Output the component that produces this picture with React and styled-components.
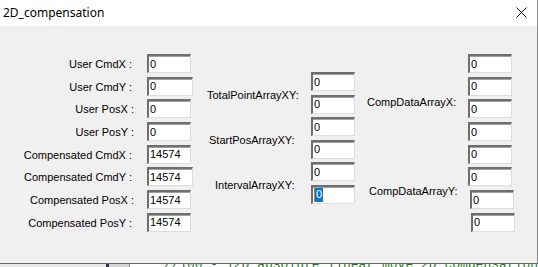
import React from "react";
import styled, { createGlobalStyle } from "styled-components";

const GlobalStyle = createGlobalStyle`
  html, body {
    margin: 0;
    padding: 0;
    background: #ffffff;
    overflow: hidden;
  }
`;

const leftRows = [
  { label: "User CmdX :", value: "0", w: 44 },
  { label: "User CmdY :", value: "0", w: 46 },
  { label: "User PosX :", value: "0", w: 44, shift: 2 },
  { label: "User PosY :", value: "0", w: 44, shift: 2 },
  { label: "Compensated CmdX :", value: "14574", w: 44 },
  { label: "Compensated CmdY :", value: "14574", w: 46 },
  { label: "Compensated PosX :", value: "14574", w: 44, shift: 2 },
  { label: "Compensated PosY :", value: "14574", w: 44 }
];

const middleGroups = [
  { label: "TotalPointArrayXY:", pad: 7 },
  { label: "StartPosArrayXY:", pad: 9 },
  { label: "IntervalArrayXY:", pad: 15, focused: true }
];

const rightFields = [
  { w: 44, x: 0 },
  { w: 44, x: 0 },
  { w: 44, x: 0 },
  { w: 44, x: 0 },
  { w: 44, x: 0 },
  { w: 44, x: 0 },
  { w: 44, x: 2 },
  { w: 44, x: 3 }
];

const App = () => {
  return (
    <Page>
      <GlobalStyle />
      <Window>
        <TitleBar>
          <Title>2D_compensation</Title>
          <CloseBtn>
            <svg width="11" height="11" viewBox="0 0 11 11">
              <path d="M0.5 0.5 L10.5 10.5 M10.5 0.5 L0.5 10.5" stroke="#111" strokeWidth="1" />
            </svg>
          </CloseBtn>
        </TitleBar>
        <Body>
          <LeftColumn>
            {leftRows.map(r => (
              <React.Fragment key={r.label}>
                <Label shift={r.shift}>{r.label}</Label>
                <Field w={r.w}>{r.value}</Field>
              </React.Fragment>
            ))}
          </LeftColumn>
          <MiddleColumn>
            {middleGroups.map((g, i) => (
              <React.Fragment key={g.label}>
                <GroupLabel pad={g.pad} row={i * 2 + 1} span={2} top={16}>
                  {g.label}
                </GroupLabel>
                <Field w={44} row={i * 2 + 1}>0</Field>
                <Field w={44} row={i * 2 + 2}>
                  {g.focused ? (
                    <Selected>
                      <Caret />0
                    </Selected>
                  ) : (
                    "0"
                  )}
                </Field>
              </React.Fragment>
            ))}
          </MiddleColumn>
          <RightColumn>
            <GroupLabel pad={7} row={1} span={5} top={41}>
              CompDataArrayX:
            </GroupLabel>
            <GroupLabel pad={9} row={6} span={3} top={17}>
              CompDataArrayY:
            </GroupLabel>
            {rightFields.map((f, i) => (
              <Field key={i} w={f.w} x={f.x} row={i + 1}>
                0
              </Field>
            ))}
          </RightColumn>
        </Body>
      </Window>
      <Backdrop>
        <Gray w={181} />
        <Navy />
        <Gray w={33} tone="#d4d4d4" />
        <Editor>//100 - 12D_absolute_linear_move_2D_compensation</Editor>
      </Backdrop>
    </Page>
  );
};

export default App;

const Page = styled.div`
  width: 538px;
  height: 267px;
  display: flex;
  flex-direction: column;
  overflow: hidden;
  font-family: "Liberation Sans", Arial, sans-serif;
`;

const Window = styled.div`
  width: 537px;
  height: 263px;
  flex-shrink: 0;
  border-right: 1px solid #8a8a8a;
  border-bottom: 1px solid #6b6b6b;
  background: #f0f0f0;
  display: flex;
  flex-direction: column;
  overflow: hidden;
`;

const TitleBar = styled.div`
  height: 26px;
  flex-shrink: 0;
  box-sizing: border-box;
  background: #ffffff;
  display: flex;
  align-items: center;
  justify-content: space-between;
  padding: 0 10px 0 3px;
`;

const Title = styled.span`
  font-family: "Noto Sans", "Open Sans", sans-serif;
  font-size: 12px;
  color: #000;
  margin-top: -1px;
`;

const CloseBtn = styled.div`
  width: 11px;
  height: 11px;
  display: flex;
  margin-top: -1px;
`;

const Body = styled.div`
  display: flex;
  align-items: flex-start;
  padding-top: 28px;
`;

const LeftColumn = styled.div`
  display: grid;
  grid-template-columns: 132px 46px;
  grid-auto-rows: 19px;
  column-gap: 15px;
  row-gap: 3.7px;
`;

const MiddleColumn = styled.div`
  display: grid;
  grid-template-columns: 111px 44px;
  grid-template-rows: repeat(6, 19px);
  row-gap: 3.6px;
  margin-left: 7px;
  margin-top: 18px;
`;

const RightColumn = styled.div`
  display: grid;
  grid-template-columns: 108px 47px;
  grid-template-rows: repeat(8, 19px);
  row-gap: 3.7px;
  margin-left: 5px;
`;

const Label = styled.div`
  font-size: 11px;
  line-height: 19px;
  color: #000;
  white-space: nowrap;
  text-align: right;
  margin-right: ${p => (p.shift ? -p.shift : 0)}px;
  margin-top: 1px;
`;

const GroupLabel = styled.div`
  grid-column: 1;
  grid-row: ${p => p.row} / span ${p => p.span};
  align-self: start;
  margin-top: ${p => p.top}px;
  padding-left: ${p => p.pad}px;
  font-size: 11px;
  line-height: 14px;
  color: #000;
  white-space: nowrap;
`;

const Field = styled.div`
  box-sizing: border-box;
  width: ${p => p.w}px;
  height: 19px;
  margin-left: ${p => p.x || 0}px;
  grid-column: 2;
  ${p => (p.row ? `grid-row: ${p.row};` : "")}
  background: #ffffff;
  border-top: 2px solid #6e6e6e;
  border-left: 2px solid #6e6e6e;
  border-right: 1px solid #dcdcdc;
  border-bottom: 1px solid #dcdcdc;
  box-shadow: inset 0 1px 0 #a0a0a0;
  font-size: 11px;
  line-height: 15px;
  padding-left: 1px;
  color: #000;
  display: flex;
  align-items: center;
  overflow: hidden;
`;

const Selected = styled.span`
  display: inline-flex;
  align-items: center;
  background: #0078d7;
  color: #fff;
  height: 14px;
  padding-right: 1px;
`;

const Caret = styled.span`
  width: 1px;
  height: 14px;
  background: #d97a00;
  margin-right: 1px;
`;

const Backdrop = styled.div`
  height: 3px;
  flex-shrink: 0;
  display: flex;
  overflow: hidden;
  background: #ffffff;
`;

const Gray = styled.div`
  width: ${p => p.w}px;
  background: ${p => p.tone || "#e8e8e8"};
`;

const Navy = styled.div`
  width: 5px;
  background: #2b3550;
`;

const Editor = styled.div`
  flex: 1;
  border-left: 1px solid #8a8a8a;
  padding-left: 34px;
  font-family: "Liberation Mono", monospace;
  font-size: 13px;
  line-height: 13px;
  color: #1f7a1f;
  white-space: nowrap;
  margin-top: -6px;
`;
